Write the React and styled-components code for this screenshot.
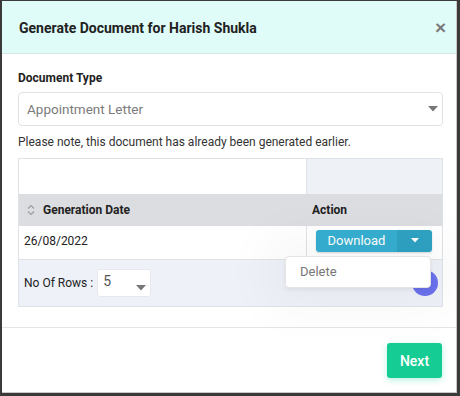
import React from 'react'
import styled, { createGlobalStyle } from 'styled-components'

const GlobalStyle = createGlobalStyle`
  html, body {
    margin: 0;
    padding: 0;
    background: #3a3a3a;
    font-family: Roboto, "Liberation Sans", sans-serif;
  }
`

const Caret = ({ color = '#777', size = 10 }) => (
    <svg width={size} height={size / 2 + 1} viewBox="0 0 10 6">
        <path d="M0 0 L10 0 L5 5.5 Z" fill={color} />
    </svg>
)

const SortIcon = () => (
    <svg width="8" height="12" viewBox="0 0 8 12">
        <path d="M1 4.5 L4 1.5 L7 4.5 M1 7.5 L4 10.5 L7 7.5" fill="none" stroke="#9a9ea5" strokeWidth="1.2" />
    </svg>
)

const App = () => {
    return (
        <Backdrop>
            <GlobalStyle />
            <Modal>
                <Header>
                    <Title>Generate Document for Harish Shukla</Title>
                    <Close>×</Close>
                </Header>
                <Body>
                    <Label>Document Type</Label>
                    <Select>
                        <span>Appointment Letter</span>
                        <Caret />
                    </Select>
                    <Note>Please note, this document has already been generated earlier.</Note>
                    <Table>
                        <Row>
                            <Cell height={35} />
                            <Cell height={35} side tint="#eef1f5" />
                        </Row>
                        <Row>
                            <HeadCell height={32}>
                                <SortIcon />
                                <span>Generation Date</span>
                            </HeadCell>
                            <HeadCell height={32} side>Action</HeadCell>
                        </Row>
                        <Row>
                            <Cell height={34} top>26/08/2022</Cell>
                            <Cell height={34} side top>
                                <Split>
                                    <SplitMain>Download</SplitMain>
                                    <SplitToggle><Caret color="#fff" size={8} /></SplitToggle>
                                </Split>
                                <Menu>
                                    <MenuItem>Delete</MenuItem>
                                </Menu>
                            </Cell>
                        </Row>
                        <Pager>
                            <PagerLabel>No Of Rows :</PagerLabel>
                            <RowSelect>
                                <span>5</span>
                                <Caret size={10} />
                            </RowSelect>
                            <Fab />
                        </Pager>
                    </Table>
                </Body>
                <Footer>
                    <NextButton>Next</NextButton>
                </Footer>
            </Modal>
        </Backdrop>
    )
}

const Backdrop = styled.div`
  width: 460px;
  height: 396px;
  box-sizing: border-box;
  padding: 1px 3px 3px 2px;
`

const Modal = styled.div`
  width: 455px;
  height: 392px;
  box-sizing: border-box;
  background: #fff;
  border-right: 1px solid #c9c9c9;
  border-bottom: 1px solid #c9c9c9;
  display: flex;
  flex-direction: column;
  overflow: hidden;
`

const Header = styled.div`
  height: 53px;
  box-sizing: border-box;
  background: #e0fcf9;
  border-bottom: 1px solid #d3e6e4;
  display: flex;
  align-items: center;
  justify-content: space-between;
  padding: 0 10px 0 17px;
`

const Title = styled.div`
  font-size: 14px;
  font-weight: 700;
  color: #222;
  margin-top: 1px;
`

const Close = styled.div`
  font-family: "Liberation Sans", sans-serif;
  font-size: 19px;
  font-weight: 700;
  color: #7a7a7a;
  line-height: 1;
`

const Body = styled.div`
  padding: 16px 13px 20px 16px;
  border-bottom: 1px solid #e4e4e4;
`

const Label = styled.div`
  font-size: 12px;
  font-weight: 700;
  color: #222;
  line-height: 16px;
`

const Select = styled.div`
  margin-top: 6px;
  height: 34px;
  box-sizing: border-box;
  border: 1px solid #e2e2e2;
  border-radius: 4px;
  display: flex;
  align-items: center;
  justify-content: space-between;
  padding: 0 4px 0 8px;
  font-size: 13.5px;
  color: #7b7b7b;
`

const Note = styled.div`
  margin-top: 8px;
  font-size: 12px;
  color: #333;
  line-height: 17px;
`

const Table = styled.div`
  margin-top: 7px;
  border: 1px solid #dfe2e6;
  display: flex;
  flex-direction: column;
`

const Row = styled.div`
  display: grid;
  grid-template-columns: 287px 1fr;
`

const Cell = styled.div`
  position: relative;
  height: ${p => p.height}px;
  box-sizing: border-box;
  background: ${p => p.tint || '#fff'};
  border-left: ${p => (p.side ? '1px solid #dfe2e6' : 'none')};
  border-bottom: ${p => (p.top ? '1px solid #dfe2e6' : 'none')};
  padding: 0 5px;
  display: flex;
  align-items: center;
  font-size: 12px;
  color: #222;
  padding-bottom: ${p => (p.top ? '4px' : '0')};
`

const HeadCell = styled.div`
  height: ${p => p.height}px;
  box-sizing: border-box;
  background: #dcdde0;
  display: flex;
  align-items: center;
  gap: 8px;
  padding: 0 ${p => (p.side ? '6px' : '8px')};
  font-size: 12px;
  font-weight: 700;
  color: #222;
`

const Split = styled.div`
  display: flex;
  height: 22px;
  margin-left: 4px;
  border-radius: 3px;
  overflow: hidden;
  box-shadow: 0 1px 2px rgba(0, 0, 0, 0.15);
`

const SplitMain = styled.div`
  width: 81px;
  background: #36afd1;
  color: #fff;
  font-size: 13px;
  display: flex;
  align-items: center;
  justify-content: center;
`

const SplitToggle = styled.div`
  width: 35px;
  background: #2fa2c3;
  display: flex;
  align-items: center;
  justify-content: center;
`

const Menu = styled.div`
  position: absolute;
  left: -22px;
  top: 30px;
  width: 146px;
  height: 32px;
  box-sizing: border-box;
  background: #fff;
  border: 1px solid #e4e4e4;
  border-radius: 4px;
  box-shadow: 0 0 50px 20px rgba(0, 0, 0, 0.035), 0 2px 4px rgba(0, 0, 0, 0.06);
  z-index: 2;
  display: flex;
  align-items: center;
`

const MenuItem = styled.div`
  padding-left: 14px;
  padding-bottom: 2px;
  font-size: 13px;
  color: #777;
`

const Pager = styled.div`
  position: relative;
  height: 46px;
  background: #eef1f8;
  display: flex;
  align-items: center;
  padding: 0 5px;
  gap: 4px;
`

const PagerLabel = styled.div`
  font-size: 12px;
  color: #222;
`

const RowSelect = styled.div`
  width: 54px;
  height: 28px;
  box-sizing: border-box;
  background: #fff;
  border: 1px solid #e6e8ec;
  border-radius: 3px;
  display: flex;
  justify-content: space-between;
  padding: 3px 4px 0 5px;
  font-size: 14px;
  color: #555;

  svg {
    margin-top: 12px;
  }
`

const Fab = styled.div`
  position: absolute;
  right: 4px;
  top: 10px;
  width: 26px;
  height: 26px;
  border-radius: 50%;
  background: #6c72ee;
`

const Footer = styled.div`
  flex: 1;
  display: flex;
  justify-content: flex-end;
  align-items: flex-start;
  padding: 15px 14px 0 0;
`

const NextButton = styled.button`
  width: 55px;
  height: 35px;
  border: none;
  border-radius: 3px;
  background: #15cc94;
  color: #fff;
  font-family: Roboto, "Liberation Sans", sans-serif;
  font-size: 14px;
  font-weight: 500;
  box-shadow: 0 2px 6px rgba(21, 204, 148, 0.3);
`

export default App
